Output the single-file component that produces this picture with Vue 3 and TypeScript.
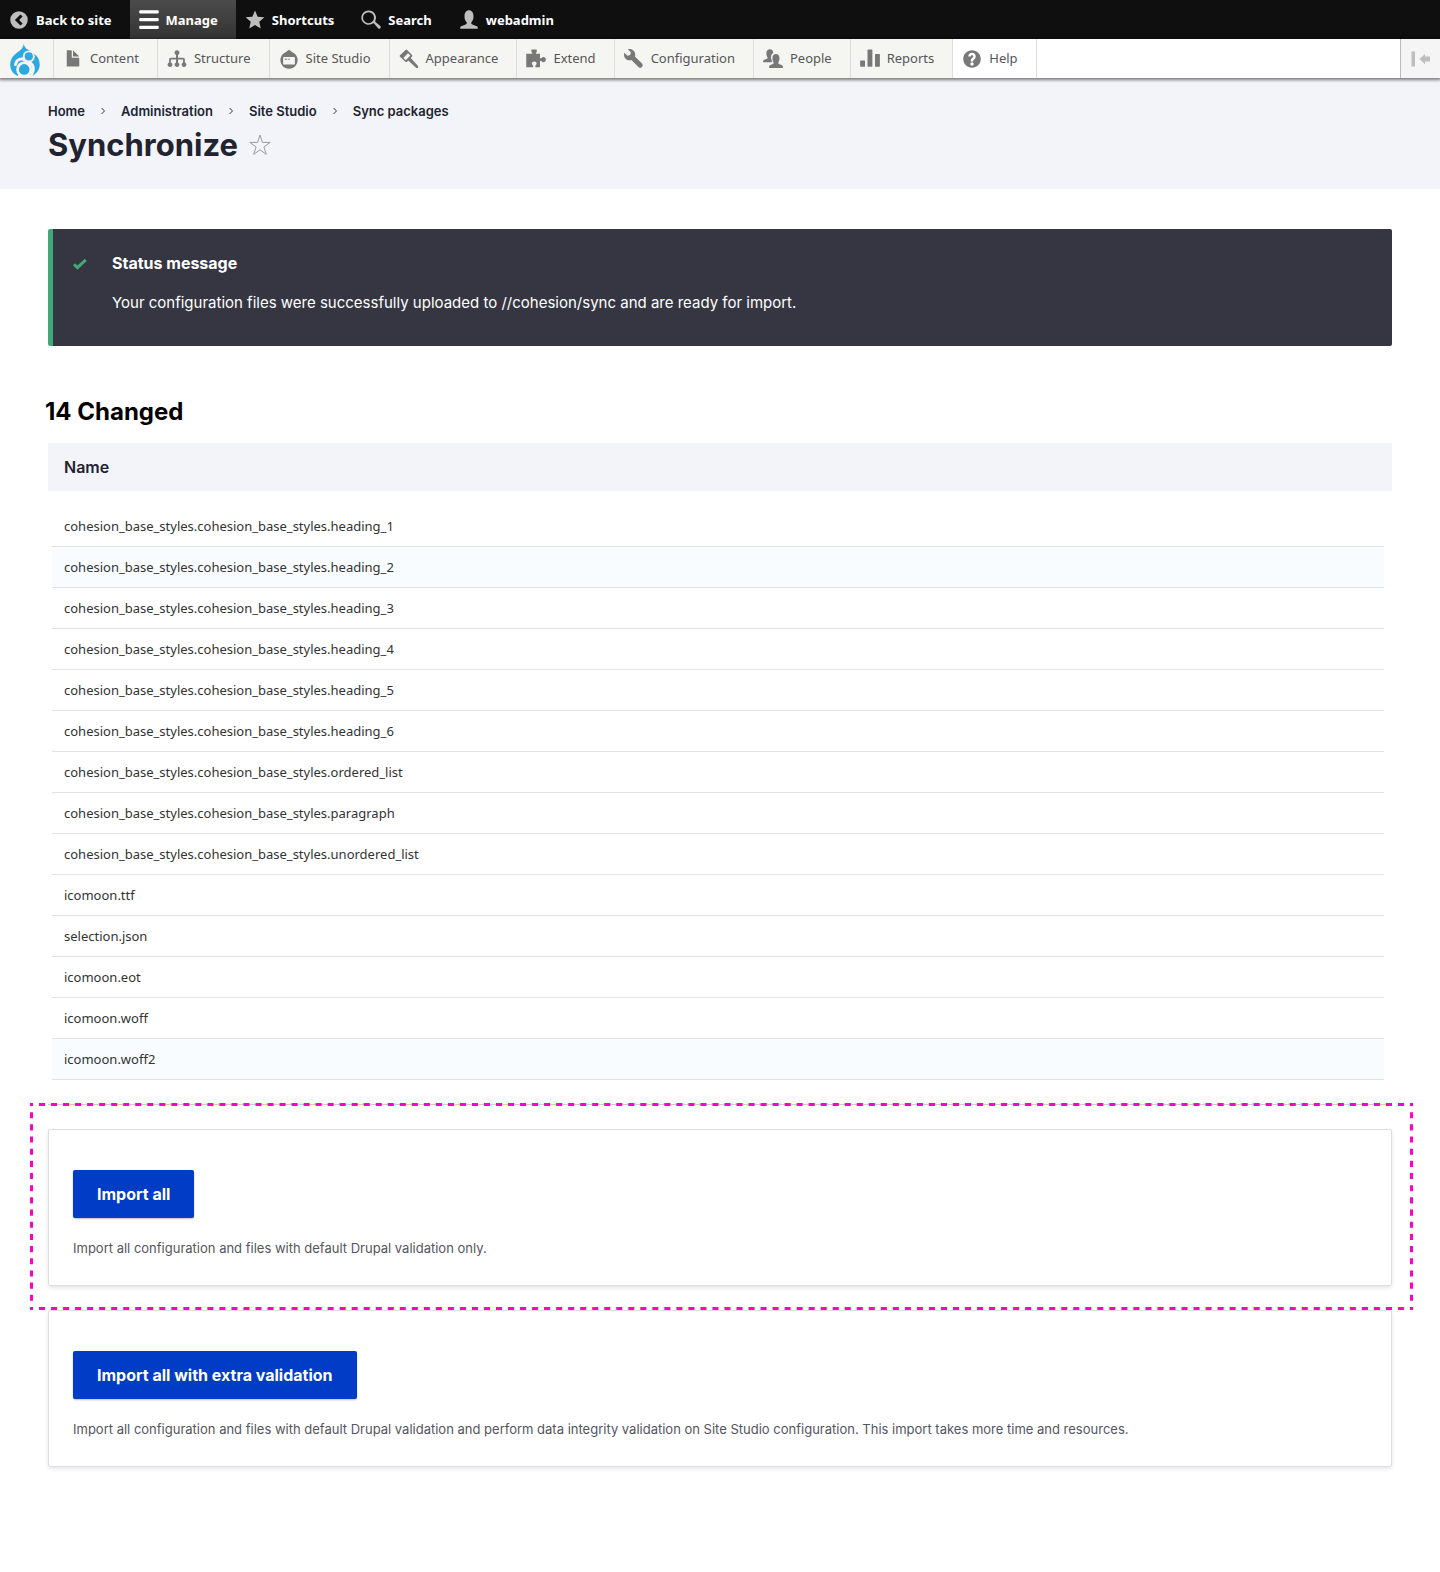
<script setup lang="ts">
interface NavItem {
  label: string
  icon: string
  active?: boolean
  plain?: boolean
}

const bar: NavItem[] = [
  { label: 'Back to site', icon: 'back' },
  { label: 'Manage', icon: 'bars', active: true },
  { label: 'Shortcuts', icon: 'star' },
  { label: 'Search', icon: 'search' },
  { label: 'webadmin', icon: 'user' },
]

const tray: NavItem[] = [
  { label: 'Content', icon: 'file' },
  { label: 'Structure', icon: 'tree' },
  { label: 'Site Studio', icon: 'studio' },
  { label: 'Appearance', icon: 'brush' },
  { label: 'Extend', icon: 'puzzle' },
  { label: 'Configuration', icon: 'wrench' },
  { label: 'People', icon: 'people' },
  { label: 'Reports', icon: 'chart' },
  { label: 'Help', icon: 'help', plain: true },
]

const icons: Record<string, string> = {
  back: 'M8 1a7 7 0 1 0 0 14a7 7 0 0 0 0-14z M9.2 3.6l1.7 1.6-2.8 2.8 2.8 2.8-1.7 1.6-4.5-4.4z',
  bars: 'M1 0.2h14a.8.8 0 0 1 .8.8v1a.8.8 0 0 1-.8.8h-14a.8.8 0 0 1-.8-.8v-1a.8.8 0 0 1 .8-.8z M1 6.4h14a.8.8 0 0 1 .8.8v1a.8.8 0 0 1-.8.8h-14a.8.8 0 0 1-.8-.8v-1a.8.8 0 0 1 .8-.8z M1 12.6h14a.8.8 0 0 1 .8.8v1a.8.8 0 0 1-.8.8h-14a.8.8 0 0 1-.8-.8v-1a.8.8 0 0 1 .8-.8z',
  star: 'M8 .4l2.1 4.9 5.4.5-4.1 3.6 1.2 5.4-4.6-2.9-4.6 2.9 1.2-5.4-4.1-3.6 5.4-.5z',
  search: 'M6 .4a5.7 5.7 0 1 0 3.6 10.1l.6.1 3.5 3.9a1.2 1.2 0 0 0 1.7-1.7l-4-3.5v-.7a5.7 5.7 0 0 0-5.4-8.2z M6 1.7a4.4 4.4 0 1 1 0 8.8a4.4 4.4 0 0 1 0-8.8z',
  user: 'M1 15v-1c0-.8.9-1.2 2.3-1.6 1.6-.5 2.6-.9 2.9-1.6.1-.5 0-1-.4-1.4-.9-1-1.4-2.4-1.4-4.3 0-3 1.4-4.8 3.6-4.8s3.6 1.8 3.6 4.8c0 1.9-.5 3.3-1.4 4.3-.4.4-.5.9-.4 1.4.3.7 1.3 1.1 2.9 1.6 1.4.4 2.3.8 2.3 1.6v1z',
  file: 'M12.5 7h-5a.5.5 0 0 1-.5-.5v-5a.5.5 0 0 0-.5-.5h-3a.5.5 0 0 0-.5.5v12a.5.5 0 0 0 .5.5h9a.5.5 0 0 0 .5-.5v-6a.5.5 0 0 0-.5-.5z M8.5 6h4c.275 0 .34-.159.146-.354l-4.293-4.292c-.195-.195-.353-.129-.353.146v4c0 .275.225.5.5.5z',
  tree: 'M8 .9a2 2 0 0 1 .8 3.8v2.3h4c.9 0 1.5.6 1.5 1.5v2.2a1.9 1.9 0 1 1-1.4 0v-2c0-.2-.1-.3-.3-.3h-3.8v2.3a1.9 1.9 0 1 1-1.6 0v-2.3h-3.8c-.2 0-.3.1-.3.3v2a1.9 1.9 0 1 1-1.4 0v-2.2c0-.9.6-1.5 1.5-1.5h4v-2.3a2 2 0 0 1 .8-3.8z',
  studio: 'M8 .6l3 2.1a6.9 6.9 0 1 1-6 0z M4 6.4a.7.7 0 0 0-.7.7v4.6a.7.7 0 0 0 .7.7h8a.7.7 0 0 0 .7-.7v-4.6a.7.7 0 0 0-.7-.7z M4.6 7.8h2v.8h-2z M7.4 7.8h1.2v.8h-1.2z',
  brush: 'M5.2.7a.9.9 0 0 1 1.3 0l3.9 4a1 1 0 0 1 0 1.3l-1 1.2 5.7 6.2a1 1 0 0 1-1.5 1.5l-6.2-5.7-1 1a1 1 0 0 1-1.3 0l-4.3-4a.9.9 0 0 1 0-1.3z M7.2 3.4l-3.7 3.7 1.9 1.8 3.7-3.7z',
  puzzle: 'M5 .4h3.6v1.9c0 .3-.7.6-.7 1v.5h3.3v3.2c0 .3.2.5.5.5.8 0 .9-1.2 2.2-1.2 1.2 0 2 .9 2 2.1s-.8 2.2-2 2.2c-1.3 0-1.4-1.3-2.2-1.3-.3 0-.5.2-.5.5v4.8h-3.7v-1.2c0-.5 1-.7 1-1.8s-.8-1.7-1.9-1.7-1.9.6-1.9 1.7 1 1.3 1 1.8v1.2h-5.5v-10.8h4.8v-.5c0-.4-.7-.7-.7-1.3v-1.6z',
  wrench: 'M14.416 11.586l-5.666-5.665c.15-.449.252-.921.252-1.421 0-2.485-2.016-4.5-4.502-4.5-.505 0-.981.102-1.434.255l2.431 2.431-.588 2.196-2.196.588-2.445-2.445c-.162.464-.268.956-.268 1.475 0 2.486 2.014 4.5 4.5 4.5.5 0 .972-.102 1.421-.251l5.667 5.665a2 2 0 0 0 2.828-2.828z',
  people: 'M5.5.2c1.8 0 2.7 1.2 2.7 3-1.2.6-1.8 1.8-1.8 3.4 0 1.3.4 2.4 1 3.1l-.8.8h-6.5v-.7c0-.7.5-1 1.6-1.4 1.3-.4 2-.8 2-1.4 0-.6-1-1.3-1-3.5 0-2 .9-3.3 2.8-3.3z M10.3 4c1.9 0 2.9 1.3 2.9 3.4 0 2.2-1 3-1 3.7 0 .6.7 1 2 1.4 1.1.4 1.7.7 1.7 1.4v1.2h-11v-1.2c0-.7.5-1 1.6-1.4 1.3-.4 2-.8 2-1.4 0-.7-1-1.5-1-3.7 0-2.1.9-3.4 2.8-3.4z',
  chart: 'M.6 9.1h2.9a.5.5 0 0 1 .5.5v4a.5.5 0 0 1-.5.5h-2.9a.5.5 0 0 1-.5-.5v-4a.5.5 0 0 1 .5-.5z M6.5.3h2.9a.5.5 0 0 1 .5.5v12.8a.5.5 0 0 1-.5.5h-2.9a.5.5 0 0 1-.5-.5v-12.8a.5.5 0 0 1 .5-.5z M12.5 3.9h2.9a.5.5 0 0 1 .5.5v9.2a.5.5 0 0 1-.5.5h-2.9a.5.5 0 0 1-.5-.5v-9.2a.5.5 0 0 1 .5-.5z',
  help: 'M8.002 1c-3.868 0-7.002 3.134-7.002 7s3.134 7 7.002 7c3.865 0 7-3.134 7-7s-3.135-7-7-7zm3 5c0 .551-.16 1.085-.477 1.586l-.158.22c-.07.093-.189.241-.361.393-.168.148-.35.299-.545.447l-.203.189-.141.129-.096.17-.021.235v.63h-2.001v-.704c.026-.396.078-.73.204-.999.125-.269.271-.498.439-.688l.225-.21-.01-.015.176-.14.137-.128c.186-.139.357-.277.516-.417l.148-.18c.098-.152.168-.323.168-.518 0-.552-.447-1-1-1s-1.002.448-1.002 1h-2c0-1.657 1.343-3 3.002-3 1.656 0 3 1.343 3 3zm-1.75 6.619c0 .344-.281.625-.625.625h-1.25c-.345 0-.626-.281-.626-.625v-1.238c0-.344.281-.625.626-.625h1.25c.344 0 .625.281.625.625v1.238z',
}

const crumbs = ['Home', 'Administration', 'Site Studio', 'Sync packages']

const base = 'cohesion_base_styles.cohesion_base_styles.'
const changed: { name: string; shaded?: boolean }[] = [
  { name: base + 'heading_1' },
  { name: base + 'heading_2', shaded: true },
  { name: base + 'heading_3' },
  { name: base + 'heading_4' },
  { name: base + 'heading_5' },
  { name: base + 'heading_6' },
  { name: base + 'ordered_list' },
  { name: base + 'paragraph' },
  { name: base + 'unordered_list' },
  { name: 'icomoon.ttf' },
  { name: 'selection.json' },
  { name: 'icomoon.eot' },
  { name: 'icomoon.woff' },
  { name: 'icomoon.woff2', shaded: true },
]
</script>

<template>
  <div class="page">
    <nav class="bar" aria-label="Toolbar">
      <a v-for="item in bar" :key="item.label" href="#" class="bar-item" :class="{ active: item.active }">
        <svg class="icon" viewBox="0 0 16 16" aria-hidden="true"><path fill-rule="evenodd" :d="icons[item.icon]" /></svg>
        <span>{{ item.label }}</span>
      </a>
    </nav>

    <nav class="tray" aria-label="Administration">
      <a href="#" class="logo" aria-label="Drupal">
        <svg viewBox="0 0 30 34" aria-hidden="true">
          <path fill="#2ba9e0" d="M13.7 0c.7 2.8 1.7 4.2 4 5.6 5.5 3.3 12 6.7 12 15 0 4.6-2.5 8.6-6.5 10.8-2 1.2-5 1.8-8.4 1.8-8.8 0-14.6-5-14.6-12.4 0-7 5-10.7 9.4-14 2.3-1.8 3.6-3.9 4.1-6.8z" />
          <path fill="none" stroke="#f5f5f2" stroke-width="3" stroke-linecap="round" d="M5.5 20.5c.7-3.6 3.4-6 7.3-5.4l7 3.4c2.7 1.7 4 4.8 3.2 8.5-.6 2.7-1.6 4.3-3 6" />
          <circle cx="18.8" cy="12.4" r="6" fill="#f5f5f2" />
          <circle cx="18.8" cy="12.4" r="4.1" fill="#2ba9e0" />
          <circle cx="14.2" cy="25.4" r="8" fill="#f5f5f2" />
          <circle cx="14.2" cy="25.4" r="5.3" fill="#2ba9e0" />
          <path fill="#f5f5f2" d="M8 31h12v3h-12z" />
        </svg>
      </a>
      <a v-for="item in tray" :key="item.label" href="#" class="tray-item" :class="{ plain: item.plain }">
        <svg class="icon" viewBox="0 0 16 16" aria-hidden="true"><path fill-rule="evenodd" :d="icons[item.icon]" /></svg>
        <span>{{ item.label }}</span>
      </a>
      <button type="button" class="toggle" aria-label="Vertical orientation">
        <svg viewBox="0 0 20 16" aria-hidden="true"><path d="M.5.5h3.5v15h-3.5z M14 2.9v2.7h5v5h-5v2.7l-5.6-5.2z" /></svg>
      </button>
    </nav>

    <header class="header">
      <nav aria-label="Breadcrumb">
        <ol class="crumbs">
          <li v-for="(crumb, i) in crumbs" :key="crumb">
            <svg v-if="i" class="chevron" viewBox="0 0 8 8" aria-hidden="true"><path d="M2.5 1l3 3-3 3" /></svg>
            <a href="#">{{ crumb }}</a>
          </li>
        </ol>
      </nav>
      <div class="title-row">
        <h1>Synchronize</h1>
        <button type="button" class="fav" aria-label="Add to shortcuts">
          <svg viewBox="0 0 22 22" aria-hidden="true"><path d="M11 1l2.4 7.4h7.8l-6.3 4.5 2.4 7.5-6.3-4.6-6.3 4.6 2.4-7.5-6.3-4.5h7.8z" /></svg>
        </button>
      </div>
    </header>

    <main class="content">
      <section class="message" role="status">
        <svg class="check" viewBox="0 0 16 12" aria-hidden="true"><path d="M2 6.2l3.4 3.4 8.4-7.8" /></svg>
        <div>
          <h2>Status message</h2>
          <p>Your configuration files were successfully uploaded to //cohesion/sync and are ready for import.</p>
        </div>
      </section>

      <h2 class="changed">14 Changed</h2>
      <table>
        <thead>
          <tr><th scope="col">Name</th></tr>
        </thead>
        <tbody>
          <tr v-for="row in changed" :key="row.name">
            <td><div class="cell" :class="{ shaded: row.shaded }">{{ row.name }}</div></td>
          </tr>
        </tbody>
      </table>

      <hr />

      <section class="card">
        <svg class="highlight" aria-hidden="true">
          <line x1="0" y1="0" x2="100%" y2="0" pathLength="1380" />
          <line x1="0" y1="100%" x2="100%" y2="100%" pathLength="1380" />
          <line x1="0" y1="0" x2="0" y2="100%" pathLength="204" />
          <line x1="100%" y1="0" x2="100%" y2="100%" pathLength="204" />
        </svg>
        <button type="button" class="primary">Import all</button>
        <p>Import all configuration and files with default Drupal validation only.</p>
      </section>

      <section class="card">
        <button type="button" class="primary">Import all with extra validation</button>
        <p>Import all configuration and files with default Drupal validation and perform data integrity validation on Site Studio configuration. This import takes more time and resources.</p>
      </section>
    </main>
  </div>
</template>

<style>
body {
  margin: 0;
  background: #fff;
}
</style>

<style scoped>
* {
  box-sizing: border-box;
}
.page {
  min-height: 100vh;
  font-family: Inter, 'Liberation Sans', sans-serif;
  color: #222330;
}
a {
  color: inherit;
  text-decoration: none;
}
button {
  font: inherit;
  border: 0;
  cursor: pointer;
}
h1,
h2,
p {
  margin: 0;
}
svg {
  display: block;
}
.bar,
.tray {
  display: flex;
  font-family: 'Noto Sans', 'Open Sans', sans-serif;
  font-size: 13px;
  line-height: 20px;
}
.bar {
  height: 39px;
  background: #0f0f0f;
  color: #fff;
  font-weight: 700;
}
.bar-item,
.tray-item {
  display: flex;
  align-items: center;
  gap: 7px;
  padding: 0 18px 0 9px;
  white-space: nowrap;
}
.icon {
  width: 20px;
  height: 20px;
  flex: none;
  fill: #bebebe;
}
.bar-item.active {
  background: linear-gradient(#4b4b4b, #333);
}
.active .icon {
  fill: #fff;
}
.tray {
  position: relative;
  height: 39px;
  background: #fff;
  color: #565656;
  box-shadow: 0 1px 3px 1px rgba(0, 0, 0, 0.5);
}
.logo {
  width: 54px;
  padding: 5px 0 0 10px;
  background: #f5f5f2;
  border-right: 1px solid #ddd;
}
.logo svg {
  width: 30px;
  height: 34px;
}
.tray-item {
  background: #f5f5f2;
  border-right: 1px solid #ddd;
}
.tray-item span {
  padding-bottom: 2px;
}
.tray-item.plain {
  background: #fff;
}
.tray .icon {
  fill: #787878;
}
.toggle {
  display: flex;
  align-items: center;
  width: 40px;
  margin-left: auto;
  padding: 0 0 0 10px;
  background: #f5f5f5;
  border-left: 1px solid #bbb;
}
.toggle svg {
  width: 20px;
  height: 16px;
  fill: #bebebe;
}
.header {
  height: 111px;
  padding: 23px 48px 0;
  background: #f3f4f9;
}
.crumbs {
  display: flex;
  margin: 0;
  padding: 0;
  list-style: none;
  font-size: 13px;
  font-weight: 600;
  line-height: 20px;
}
.crumbs li {
  display: flex;
  align-items: center;
}
.chevron {
  width: 8px;
  height: 8px;
  margin: 0 14px;
  fill: none;
  stroke: #33343f;
}
.title-row {
  display: flex;
  align-items: center;
  gap: 11px;
}
h1 {
  font-size: 31px;
  line-height: 48px;
  font-weight: 700;
}
.fav {
  padding: 0;
  background: none;
}
.fav svg {
  width: 22px;
  height: 22px;
  fill: none;
  stroke: #9a9aa5;
}
.content {
  padding: 40px 48px 80px;
}
.message {
  display: flex;
  gap: 24px;
  padding: 22px 24px 31px 19px;
  background: #353641;
  border-left: 5px solid #42a877;
  border-radius: 2px;
  color: #fff;
  font-size: 15px;
  line-height: 24px;
}
.message h2 {
  font-size: 16px;
  font-weight: 700;
  margin-bottom: 16px;
}
.check {
  width: 16px;
  height: 12px;
  margin-top: 7px;
  flex: none;
  fill: none;
  stroke: #42a877;
  stroke-width: 3;
}
.changed {
  margin: 50px 0 16px -3px;
  font-size: 24px;
  line-height: 31px;
  font-weight: 700;
  color: #000;
}
table {
  width: 100%;
  border-collapse: collapse;
}
th {
  height: 48px;
  padding: 0 16px;
  background: #f3f4f9;
  font-size: 16px;
  font-weight: 600;
  text-align: left;
}
tbody::before {
  content: '';
  display: block;
  height: 15px;
}
td {
  padding: 0 8px 0 4px;
}
.cell {
  padding: 10px 12px;
  border-bottom: 1px solid #e2e2e2;
  font-family: 'Noto Sans', 'Open Sans', sans-serif;
  font-size: 13px;
  line-height: 20px;
  color: #333;
}
.cell.shaded {
  background: #f8fcff;
}
hr {
  height: 1px;
  margin: 24px 0;
  border: 0;
  background: #ccc;
}
.card {
  position: relative;
  margin-bottom: 24px;
  padding: 40px 24px 27px;
  border: 1px solid #dedfe4;
  border-radius: 2px;
  box-shadow: 0 2px 4px rgba(0, 0, 0, 0.1);
}
.primary {
  height: 48px;
  padding: 0 24px;
  border-radius: 2px;
  background: #003cc5;
  box-shadow: 0 1px 2px rgba(0, 0, 0, 0.25);
  color: #fff;
  font-size: 16px;
  font-weight: 700;
}
.card p {
  margin-top: 20px;
  font-size: 13px;
  line-height: 20px;
  color: #545560;
}
.highlight {
  position: absolute;
  top: -27px;
  left: -19px;
  width: calc(100% + 41px);
  height: calc(100% + 52px);
  pointer-events: none;
}
/* half of each stroke is clipped by the svg edge, leaving a 3px dash */
.highlight line {
  stroke: #ff00c8;
  stroke-width: 6;
  stroke-dasharray: 6 6;
  stroke-dashoffset: 3;
}
</style>
